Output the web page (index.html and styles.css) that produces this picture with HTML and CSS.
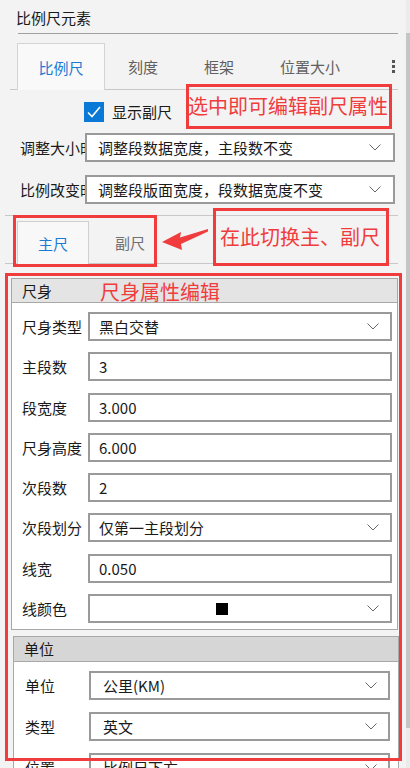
FILE: index.html
```html
<!DOCTYPE html>
<html lang="zh-CN">
<head>
  <meta charset="UTF-8" />
  <meta name="viewport" content="width=device-width, initial-scale=1.0"/>
  <title>比例尺元素</title>
  <link rel="stylesheet" href="styles.css">
</head>
<body>

<div class="page">
  <div class="title">比例尺元素</div>

  <div class="tabs">
    <div class="tab active">比例尺</div>
    <div class="tab">刻度</div>
    <div class="tab">框架</div>
    <div class="tab">位置大小</div>
    <div class="more"><i></i><i></i><i></i></div>
  </div>

  <div class="check-row">
    <span class="checkbox">
      <svg width="20" height="20" viewBox="0 0 20 20"><polyline points="4,10.5 8,14.5 16,5" fill="none" stroke="#fff" stroke-width="1.6"/></svg>
    </span>
    <span>显示副尺</span>
  </div>

  <div class="opt-row">
    <div class="opt-label">调整大小时</div>
    <div class="field select">
      <span class="val">调整段数据宽度，主段数不变</span>
      <svg class="chev" width="12" height="7" viewBox="0 0 12 7"><polyline points="0.5,0.5 6,6 11.5,0.5" fill="none" stroke="#666" stroke-width="1"/></svg>
    </div>
  </div>
  <div class="opt-row second">
    <div class="opt-label">比例改变时</div>
    <div class="field select">
      <span class="val">调整段版面宽度，段数据宽度不变</span>
      <svg class="chev" width="12" height="7" viewBox="0 0 12 7"><polyline points="0.5,0.5 6,6 11.5,0.5" fill="none" stroke="#666" stroke-width="1"/></svg>
    </div>
  </div>

  <div class="subtabs">
    <div class="subtab active">主尺</div>
    <div class="subtab">副尺</div>
  </div>

  <div class="group">
    <div class="group-head">尺身</div>
    <div class="group-body">
      <div class="row">
        <div class="row-label">尺身类型</div>
        <div class="field select">
          <span class="val">黑白交替</span>
          <svg class="chev" width="12" height="7" viewBox="0 0 12 7"><polyline points="0.5,0.5 6,6 11.5,0.5" fill="none" stroke="#666" stroke-width="1"/></svg>
        </div>
      </div>
      <div class="row">
        <div class="row-label">主段数</div>
        <div class="field"><span class="val">3</span></div>
      </div>
      <div class="row">
        <div class="row-label">段宽度</div>
        <div class="field"><span class="val">3.000</span></div>
      </div>
      <div class="row">
        <div class="row-label">尺身高度</div>
        <div class="field"><span class="val">6.000</span></div>
      </div>
      <div class="row">
        <div class="row-label">次段数</div>
        <div class="field"><span class="val">2</span></div>
      </div>
      <div class="row">
        <div class="row-label">次段划分</div>
        <div class="field select">
          <span class="val">仅第一主段划分</span>
          <svg class="chev" width="12" height="7" viewBox="0 0 12 7"><polyline points="0.5,0.5 6,6 11.5,0.5" fill="none" stroke="#666" stroke-width="1"/></svg>
        </div>
      </div>
      <div class="row">
        <div class="row-label">线宽</div>
        <div class="field"><span class="val">0.050</span></div>
      </div>
      <div class="row">
        <div class="row-label">线颜色</div>
        <div class="field select">
          <span class="swatch-box"><i class="swatch"></i></span>
          <svg class="chev" width="12" height="7" viewBox="0 0 12 7"><polyline points="0.5,0.5 6,6 11.5,0.5" fill="none" stroke="#666" stroke-width="1"/></svg>
        </div>
      </div>
    </div>
  </div>

  <div class="group unit">
    <div class="group-head">单位</div>
    <div class="group-body">
      <div class="row">
        <div class="row-label">单位</div>
        <div class="field select">
          <span class="val">公里(KM)</span>
          <svg class="chev" width="12" height="7" viewBox="0 0 12 7"><polyline points="0.5,0.5 6,6 11.5,0.5" fill="none" stroke="#666" stroke-width="1"/></svg>
        </div>
      </div>
      <div class="row">
        <div class="row-label">类型</div>
        <div class="field select">
          <span class="val">英文</span>
          <svg class="chev" width="12" height="7" viewBox="0 0 12 7"><polyline points="0.5,0.5 6,6 11.5,0.5" fill="none" stroke="#666" stroke-width="1"/></svg>
        </div>
      </div>
      <div class="row">
        <div class="row-label">位置</div>
        <div class="field select">
          <span class="val">比例尺下方</span>
          <svg class="chev" width="12" height="7" viewBox="0 0 12 7"><polyline points="0.5,0.5 6,6 11.5,0.5" fill="none" stroke="#666" stroke-width="1"/></svg>
        </div>
      </div>
    </div>
  </div>

  <!-- annotations drawn over the panel -->
  <div class="note note-check">选中即可编辑副尺属性</div>
  <div class="note note-switch">在此切换主、副尺</div>
  <div class="note-frame frame-tabs"></div>
  <div class="note-frame frame-body"></div>
  <div class="note-text">尺身属性编辑</div>
  <svg class="arrow" width="50" height="26" viewBox="0 0 50 26">
    <polygon points="2,16 21,6 20,11.5 48,3 48,5.5 21,18 22,24" fill="#f03c3c"/>
  </svg>

  <div class="scrollbar"><div class="thumb"></div></div>
</div>

</body>
</html>
```

FILE: styles.css
```css
body {
  margin: 0;
  background: #f3f3f3;
  font-family: "Noto Sans CJK SC", "Noto Sans", sans-serif;
  font-size: 15px;
  color: #1a1a1a;
}
.page {
  position: relative;
  width: 410px;
  height: 768px;
  overflow: hidden;
}
.title {
  margin: 0 12px 0 18px;
  padding-top: 7px;
  height: 26px;
  line-height: 22px;
  text-indent: -2px;
  border-bottom: 1px solid #a0a0a0;
}
.tabs {
  display: flex;
  align-items: flex-start;
  margin: 9px 12px 0 10px;
  padding-left: 7px;
  height: 46px;
  border-bottom: 1px solid #c8c8c8;
}
.tab {
  display: flex;
  align-items: center;
  height: 46px;
  padding: 0 23px;
  color: #606060;
}
.tab.active {
  box-sizing: border-box;
  width: 88px;
  height: 47px;
  padding: 0;
  justify-content: center;
  background: #f9f9f9;
  border: 1px solid #d4d4d4;
  border-bottom: none;
  color: #1a7ad4;
}
.more {
  margin-left: auto;
  margin-right: 3px;
  align-self: center;
  display: flex;
  flex-direction: column;
  gap: 2px;
}
.more i {
  display: block;
  width: 3px;
  height: 3px;
  background: #555;
}
.check-row {
  display: flex;
  align-items: center;
  gap: 8px;
  margin-top: 11px;
  padding-left: 84px;
  height: 21px;
}
.checkbox {
  width: 20px;
  height: 20px;
  background: #0a78d7;
}
.checkbox svg {
  display: block;
}
.opt-row {
  display: flex;
  align-items: center;
  margin-top: 11px;
  padding: 0 15px 0 20px;
}
.opt-row.second {
  margin-top: 13px;
}
.opt-label {
  width: 65px;
  overflow: hidden;
  white-space: nowrap;
  flex-shrink: 0;
}
.field {
  box-sizing: border-box;
  flex: 1;
  display: flex;
  align-items: center;
  height: 29px;
  padding: 0 11px 0 9px;
  background: #fff;
  border: 2px solid #9a9a9a;
  white-space: nowrap;
}
.opt-row .field {
  padding-left: 11px;
  padding-right: 12px;
}
.field .val {
  flex: 1;
}
.chev {
  display: block;
  flex-shrink: 0;
}
.swatch-box {
  flex: 1;
  display: flex;
  justify-content: center;
  padding-right: 22px;
}
.swatch {
  display: block;
  width: 12px;
  height: 12px;
  background: #000;
}
.subtabs {
  display: flex;
  margin: 11px 12px 0 5px;
  padding: 5px 0 0 12px;
  height: 42px;
  border-top: 1px solid #c8c8c8;
  border-bottom: 1px solid #c8c8c8;
}
.subtab {
  display: flex;
  align-items: center;
  justify-content: center;
  width: 82px;
  height: 42px;
  color: #707070;
}
.subtab.active {
  box-sizing: border-box;
  width: 72px;
  height: 43px;
  background: #f8f8f8;
  border: 1px solid #d0d0d0;
  border-bottom: none;
  color: #1a7ad4;
}
.group {
  margin: 14px 12px 0 11px;
  background: #fff;
  border: 1px solid #a8a8a8;
}
.group-head {
  height: 23px;
  line-height: 23px;
  padding-left: 10px;
  background: #e4e4e4;
  border-bottom: 1px solid #a8a8a8;
}
.group-body {
  display: flex;
  flex-direction: column;
  gap: 11.3px;
  padding: 9px 5px 6px 10px;
}
.row {
  display: flex;
  align-items: center;
}
.row-label {
  width: 66px;
  flex-shrink: 0;
}
.group.unit {
  margin: 6px 11px 0 13px;
}
.unit .group-head {
  height: 24px;
  line-height: 24px;
  background: #d6d6d6;
}
.unit .group-body {
  gap: 12px;
  padding: 9px 8px 6px 11px;
}
.unit .row-label {
  width: 64px;
}
.unit .field {
  padding-left: 12px;
}

/* red annotations */
.note {
  position: absolute;
  box-sizing: border-box;
  border: 3px solid #f03c3c;
  color: #f03c3c;
  font-size: 20px;
  white-space: nowrap;
}
.note-check {
  left: 186px;
  top: 84px;
  width: 206px;
  height: 45px;
  line-height: 38px;
  text-indent: -1px;
}
.note-switch {
  left: 213px;
  top: 208px;
  width: 176px;
  height: 58px;
  padding: 6px 0 0 4px;
  line-height: 40px;
}
.note-frame {
  position: absolute;
  box-sizing: border-box;
  border: 3px solid #f03c3c;
}
.frame-tabs {
  left: 13px;
  top: 215px;
  width: 144px;
  height: 52px;
}
.frame-body {
  left: 5px;
  top: 273px;
  width: 397px;
  height: 488px;
}
.note-text {
  position: absolute;
  left: 100px;
  top: 280px;
  font-size: 20px;
  line-height: 24px;
  color: #f03c3c;
}
.arrow {
  position: absolute;
  left: 160px;
  top: 226px;
}
.scrollbar {
  position: absolute;
  top: 0;
  right: 0;
  width: 4px;
  height: 100%;
  background: #ebebeb;
}
.thumb {
  margin-top: 33px;
  height: 695px;
  background: #c3c5c7;
}
```
